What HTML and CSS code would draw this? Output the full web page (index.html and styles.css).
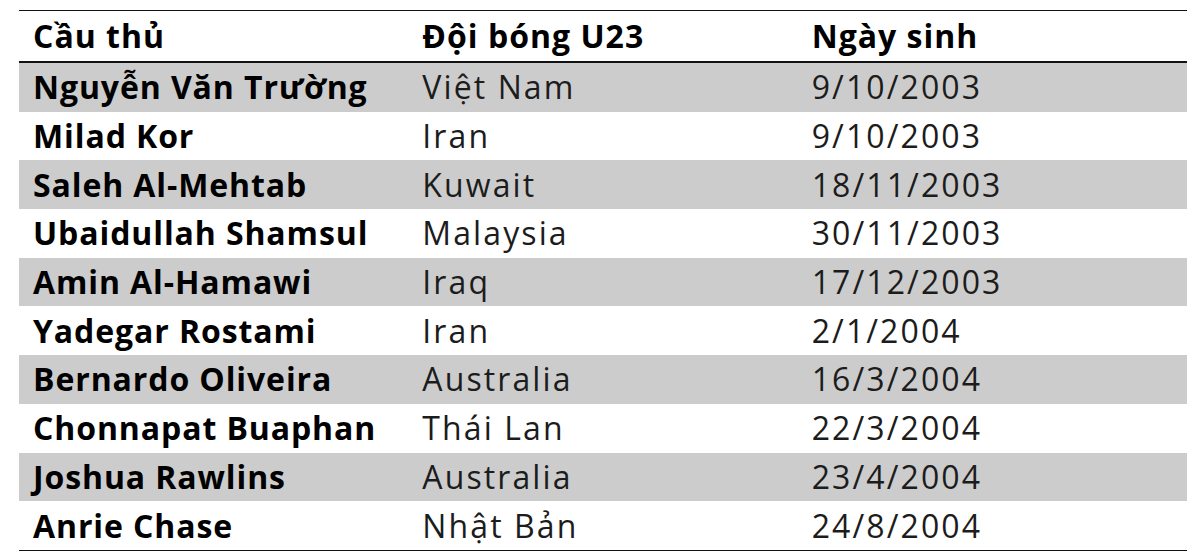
FILE: index.html
```html
<!DOCTYPE html>
<html lang="vi">
<head>
<meta charset="utf-8">
<link rel="stylesheet" href="styles.css">
</head>
<body>
<table class="players">
  <thead>
    <tr><th>Cầu thủ</th><th>Đội bóng U23</th><th>Ngày sinh</th></tr>
  </thead>
  <tbody>
    <tr class="shade"><td class="name">Nguyễn Văn Trường</td><td>Việt Nam</td><td>9/10/2003</td></tr>
    <tr><td class="name">Milad Kor</td><td>Iran</td><td>9/10/2003</td></tr>
    <tr class="shade"><td class="name">Saleh Al-Mehtab</td><td>Kuwait</td><td>18/11/2003</td></tr>
    <tr><td class="name">Ubaidullah Shamsul</td><td>Malaysia</td><td>30/11/2003</td></tr>
    <tr class="shade"><td class="name">Amin Al-Hamawi</td><td>Iraq</td><td>17/12/2003</td></tr>
    <tr><td class="name">Yadegar Rostami</td><td>Iran</td><td>2/1/2004</td></tr>
    <tr class="shade"><td class="name">Bernardo Oliveira</td><td>Australia</td><td>16/3/2004</td></tr>
    <tr><td class="name">Chonnapat Buaphan</td><td>Thái Lan</td><td>22/3/2004</td></tr>
    <tr class="shade"><td class="name">Joshua Rawlins</td><td>Australia</td><td>23/4/2004</td></tr>
    <tr><td class="name">Anrie Chase</td><td>Nhật Bản</td><td>24/8/2004</td></tr>
  </tbody>
</table>
</body>
</html>
```
FILE: styles.css
```css
html, body {
  margin: 0;
  padding: 0;
  background: #ffffff;
}
body {
  padding: 10px 13px 0 19px;
  font-family: "Open Sans", Lato, sans-serif;
  color: #111111;
}
.players {
  width: 1168px;
  border-collapse: collapse;
  table-layout: fixed;
  border-top: 1.5px solid #111111;
  border-bottom: 1.5px solid #111111;
}
.players th,
.players td {
  width: 33.33%;
  padding: 0 0 0 14px;
  text-align: left;
  white-space: nowrap;
  font-size: 32px;
  line-height: 1;
}
.players th {
  height: 50px;
  font-weight: 700;
  letter-spacing: 1px;
  color: #000000;
  border-bottom: 2px solid #111111;
}
.players td {
  height: 48.7px;
  font-weight: 400;
  letter-spacing: 2.1px;
  color: #1c1c1c;
}
.players td.name {
  font-weight: 700;
  letter-spacing: 0.9px;
  color: #000000;
}
.players tr.shade td {
  background: #cccccc;
}
```
